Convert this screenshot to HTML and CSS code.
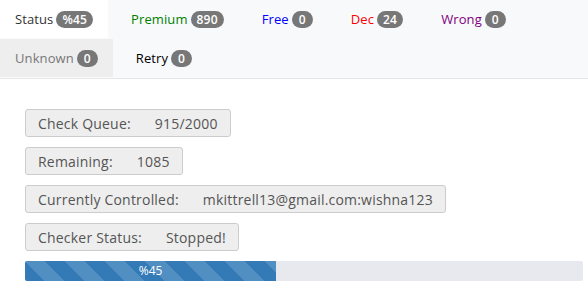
FILE: index.html
```html
<!DOCTYPE html>
<html>
<head>
<meta charset="utf-8">
<link rel="stylesheet" href="styles.css">
</head>
<body>
<ul class="tabs">
  <li class="tab active"><span class="name">Status</span><span class="badge">%45</span></li>
  <li class="tab premium"><span class="name">Premium</span><span class="badge">890</span></li>
  <li class="tab free"><span class="name">Free</span><span class="badge">0</span></li>
  <li class="tab dec"><span class="name">Dec</span><span class="badge">24</span></li>
  <li class="tab wrong"><span class="name">Wrong</span><span class="badge">0</span></li>
  <li class="tab unknown"><span class="name">Unknown</span><span class="badge">0</span></li>
  <li class="tab retry"><span class="name">Retry</span><span class="badge">0</span></li>
</ul>
<div class="panel">
  <div class="info"><span>Check Queue:</span><span class="val">915/2000</span></div>
  <div class="info"><span>Remaining:</span><span class="val">1085</span></div>
  <div class="info"><span>Currently Controlled:</span><span class="val">mkittrell13@gmail.com:wishna123</span></div>
  <div class="info"><span>Checker Status:</span><span class="val">Stopped!</span></div>
  <div class="progress"><div class="bar" style="width:45%">%45</div></div>
</div>
</body>
</html>
```
FILE: styles.css
```css
* { box-sizing: border-box; }
html, body { margin: 0; padding: 0; background: #fff; }
body { font-family: "Open Sans", "DejaVu Sans", sans-serif; color: #333; }

.tabs {
  list-style: none;
  margin: 0;
  padding: 0 0 1px 0;
  display: flex;
  flex-wrap: wrap;
  column-gap: 8px;
  row-gap: 1px;
  background: #f8f9fb;
  border-bottom: 1px solid #e6e6e6;
}
.tab {
  height: 38px;
  padding: 0 15px;
  display: flex;
  align-items: center;
  font-size: 13px;
  letter-spacing: 0.1px;
}
.tab .name { margin-right: 3px; }
.badge {
  display: inline-block;
  background: #777;
  color: #fff;
  font-size: 12px;
  line-height: 17px;
  height: 17px;
  min-width: 21px;
  padding: 0 6px;
  border-radius: 9px;
  text-align: center;
  font-weight: 600;
  letter-spacing: 0.2px;
}
.tab.active { background: #fff; color: #333; }
.premium { color: #008000; }
.free { color: #0000ff; }
.dec { color: #ff0000; }
.wrong { color: #800080; }
.unknown { background: #eee; color: #777; }
.retry { color: #000; }

.panel {
  padding: 30px 5px 0 25px;
  display: flex;
  flex-direction: column;
  align-items: flex-start;
  gap: 10px;
}
.info {
  display: flex;
  height: 28px;
  align-items: center;
  padding: 0 12px;
  background: #eee;
  border: 1px solid #ccc;
  border-radius: 3px;
  font-size: 14px;
  letter-spacing: 0.2px;
  color: #555;
}
.info .val { margin-left: 24px; }

.progress {
  align-self: stretch;
  height: 20px;
  background: #e8e9ee;
  border-radius: 2px;
  overflow: hidden;
}
.bar {
  height: 20px;
  background-color: #337ab7;
  background-image: linear-gradient(45deg, rgba(255,255,255,.15) 25%, transparent 25%, transparent 50%, rgba(255,255,255,.15) 50%, rgba(255,255,255,.15) 75%, transparent 75%, transparent);
  background-size: 40px 40px;
  color: #fff;
  font-size: 12px;
  line-height: 20px;
  text-align: center;
}
```
